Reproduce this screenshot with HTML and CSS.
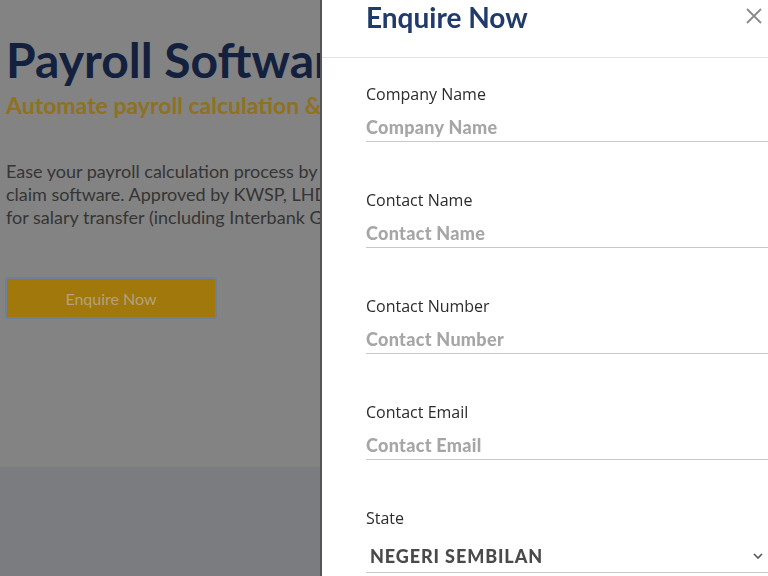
FILE: index.html
```html
<!DOCTYPE html>
<html lang="en">
<head>
    <meta charset="UTF-8">
    <meta name="viewport" content="width=device-width, initial-scale=1.0">
    <title>Payroll Software - Enquire Now</title>
    <link rel="stylesheet" href="styles.css">
</head>
<body>
    <!-- Page behind the drawer (dimmed) -->
    <section class="hero">
        <h1>Payroll Software</h1>
        <h2>Automate payroll calculation &amp; claims</h2>
        <p>Ease your payroll calculation process by using our payroll and leave<br>
           claim software. Approved by KWSP, LHDN, PERKESO and HRDF. Supports bank files<br>
           for salary transfer (including Interbank GIRO).</p>
        <button class="hero-button" type="button">Enquire Now</button>
    </section>
    <section class="next-section"></section>

    <!-- Enquiry drawer -->
    <aside class="drawer">
        <div class="drawer-header">
            <h3>Enquire Now</h3>
            <button class="close-button" type="button" aria-label="Close">
                <svg width="16" height="16" viewBox="0 0 16 16">
                    <path d="M1 1 L15 15 M15 1 L1 15" stroke="#8a8a8a" stroke-width="1.8" fill="none"/>
                </svg>
            </button>
        </div>

        <form class="drawer-form">
            <div class="field">
                <label for="company">Company Name</label>
                <input type="text" id="company" placeholder="Company Name">
            </div>
            <div class="field">
                <label for="contactName">Contact Name</label>
                <input type="text" id="contactName" placeholder="Contact Name">
            </div>
            <div class="field">
                <label for="contactNumber">Contact Number</label>
                <input type="text" id="contactNumber" placeholder="Contact Number">
            </div>
            <div class="field">
                <label for="contactEmail">Contact Email</label>
                <input type="text" id="contactEmail" placeholder="Contact Email">
            </div>
            <div class="field">
                <label for="state">State</label>
                <div class="select-wrap">
                    <select id="state">
                        <option>NEGERI SEMBILAN</option>
                        <option>SELANGOR</option>
                        <option>JOHOR</option>
                    </select>
                    <svg class="chevron" width="10" height="6" viewBox="0 0 10 6">
                        <path d="M1 1 L5 5 L9 1" stroke="#555" stroke-width="1.6" fill="none"/>
                    </svg>
                </div>
            </div>
        </form>
    </aside>
</body>
</html>
```

FILE: styles.css
```css
body {
    margin: 0;
    font-family: Lato, "Open Sans", sans-serif;
    background-color: #838383;
    overflow: hidden;
}

.hero {
    height: 467px;
    padding: 0 0 0 6px;
    box-sizing: border-box;
    overflow: hidden;
    white-space: nowrap;
}

.hero h1 {
    margin: 0;
    padding-top: 31px;
    font-size: 48px;
    line-height: 58px;
    font-weight: 700;
    color: #13213e;
}

.hero h2 {
    margin: 0;
    padding-top: 2px;
    font-size: 23px;
    line-height: 28px;
    font-weight: 700;
    color: #8f7120;
}

.hero p {
    margin: 41px 0 0 0;
    font-size: 18px;
    line-height: 23px;
    color: #353535;
}

.hero-button {
    margin: 48px 0 0 -1px;
    width: 212px;
    height: 42px;
    background-color: #a0780c;
    border: 2px solid #6f7f96;
    border-radius: 3px;
    color: #b3a27c;
    font-family: Lato, sans-serif;
    font-size: 16px;
}

.next-section {
    height: 109px;
    background-color: #7b7c7f;
}

.drawer {
    position: fixed;
    top: 0;
    left: 322px;
    right: 0;
    bottom: 0;
    background-color: #fff;
    box-shadow: -2px 0 0 #555;
}

.drawer-header {
    height: 57px;
    border-bottom: 1px solid #e2e2e2;
    display: flex;
    justify-content: space-between;
    align-items: flex-start;
    padding-left: 44px;
}

.drawer-header h3 {
    margin: 0;
    font-size: 28px;
    line-height: 34px;
    font-weight: 700;
    color: #1f3a6b;
}

.close-button {
    margin: 8px 6px 0 0;
    padding: 0;
    border: none;
    background: none;
    cursor: pointer;
}

.drawer-form {
    padding: 26px 0 0 44px;
}

.field {
    margin-bottom: 48px;
}

.field label {
    display: block;
    font-family: "Open Sans", Lato, sans-serif;
    font-size: 16px;
    line-height: 20px;
    color: #2c2c2c;
    margin-bottom: 9px;
}

.field input, .field select {
    display: block;
    width: 100%;
    box-sizing: border-box;
    height: 29px;
    padding: 0;
    border: none;
    border-bottom: 1px solid #c8c8c8;
    font-family: Lato, sans-serif;
    font-size: 18px;
    font-weight: 900;
    letter-spacing: 0.3px;
    color: #444;
    background: transparent;
    outline: none;
}

.field input::placeholder {
    color: #a6a6a6;
}

.select-wrap {
    position: relative;
}

.field select {
    appearance: none;
    height: 36px;
    padding: 2px 0 0 4px;
    letter-spacing: 0.9px;
    color: #4a4a4a;
}

.chevron {
    position: absolute;
    right: 5px;
    top: 16px;
    pointer-events: none;
}
```
